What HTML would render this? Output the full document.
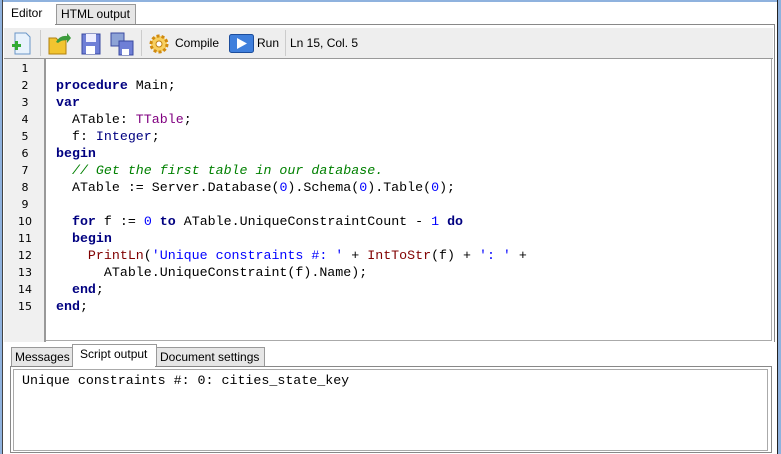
<!DOCTYPE html>
<html><head><style>
body{margin:0;width:781px;height:454px;background:#fff;position:relative;overflow:hidden;font-family:"Liberation Sans",sans-serif;font-size:12px}
.a{position:absolute}
.code{font-family:"Liberation Mono",monospace;font-size:13.3px;line-height:17px;white-space:pre;color:#000}
.k{color:#000080;font-weight:bold}.n{color:#0000ff}.s{color:#0000ff}.f{color:#800000}.t{color:#800080}.c{color:#008000;font-style:italic}.i{color:#000080}
.ln{font-family:"DejaVu Sans",sans-serif;font-size:11px;line-height:17px;text-align:center;color:#000}
</style></head><body>
<div class="a" style="left:0;top:0;width:781px;height:2px;background:#8fb2de"></div>
<div class="a" style="left:0;top:0;width:3px;height:454px;background:#8fb2de"></div>
<div class="a" style="left:2px;top:0;width:1px;height:454px;background:#444"></div>
<div class="a" style="left:777px;top:0;width:1px;height:454px;background:#222"></div>
<div class="a" style="left:778px;top:0;width:3px;height:454px;background:#8fb2de"></div>
<!-- tabs -->
<div class="a" style="left:56px;top:4px;width:78px;height:20px;background:#e6e6e6;border:1px solid #999;border-bottom:none"></div>
<div class="a" style="left:61px;top:7px">HTML output</div>
<div class="a" style="left:11px;top:6px">Editor</div>
<div class="a" style="left:55px;top:24px;width:720px;height:1px;background:#888"></div>
<div class="a" style="left:774px;top:24px;width:1px;height:318px;background:#888"></div>
<!-- toolbar -->
<div class="a" style="left:4px;top:28px;width:769px;height:30px;background:#eee"></div>
<div class="a" style="left:40px;top:30px;width:1px;height:26px;background:#ccc"></div>
<div class="a" style="left:141px;top:30px;width:1px;height:26px;background:#ccc"></div>
<div class="a" style="left:285px;top:30px;width:1px;height:26px;background:#ccc"></div>
<svg class="a" style="left:10px;top:32px" width="24" height="24"><path d="M5 1h11l4 4v17H5z" fill="#e8f2fc" stroke="#6a96c8"/><rect x="2" y="12" width="9" height="3" fill="#3a3"/><rect x="5" y="9" width="3" height="9" fill="#3a3"/></svg>
<svg class="a" style="left:48px;top:32px" width="24" height="24"><path d="M1 6h7l2 2h8v14H1z" fill="#f2c430" stroke="#b08010"/><path d="M8 10q4-7 11-6l0-3 4 5-4 5 0-3q-6 0-9 3z" fill="#3c9b3c"/></svg>
<svg class="a" style="left:80px;top:32px" width="22" height="24"><rect x="2" y="2" width="18" height="20" fill="#6f7fd6" stroke="#3a4aa0"/><rect x="6" y="2" width="10" height="8" fill="#eef"/><rect x="6" y="14" width="9" height="8" fill="#fff"/></svg>
<svg class="a" style="left:110px;top:32px" width="24" height="24"><rect x="1" y="1" width="13" height="13" fill="#8da3d6" stroke="#3a4aa0"/><rect x="9" y="9" width="14" height="14" fill="#6f7fd6" stroke="#3a4aa0"/><rect x="12" y="17" width="7" height="6" fill="#fff"/></svg>
<svg class="a" style="left:148px;top:33px" width="22" height="22"><circle cx="11" cy="11" r="8" fill="#f8d060" stroke="#d08a10" stroke-width="3" stroke-dasharray="3 2"/><circle cx="11" cy="11" r="3" fill="#fff" stroke="#c08010"/></svg>
<div class="a" style="left:175px;top:36px">Compile</div>
<svg class="a" style="left:229px;top:34px" width="25" height="19"><rect x="0.5" y="0.5" width="24" height="18" rx="2" fill="#3f7fdc" stroke="#1c4d9c"/><path d="M8 4l10 5.5L8 15z" fill="#fff"/></svg>
<div class="a" style="left:257px;top:36px">Run</div>
<div class="a" style="left:290px;top:36px">Ln 15, Col. 5</div>
<!-- editor -->
<div class="a" style="left:4px;top:58px;width:769px;height:1px;background:#999"></div>
<div class="a" style="left:4px;top:59px;width:41px;height:283px;background:#f0f0f0"></div>
<div class="a" style="left:44px;top:59px;width:2px;height:283px;background:#999"></div>
<div class="a" style="left:771px;top:59px;width:1px;height:282px;background:#aaa"></div>
<div class="a" style="left:46px;top:340px;width:726px;height:1px;background:#aaa"></div>
<div class="a ln" style="left:4px;top:60px;width:42px">1<br>2<br>3<br>4<br>5<br>6<br>7<br>8<br>9<br>10<br>11<br>12<br>13<br>14<br>15</div>
<div class="a code" style="left:56px;top:60px">
<span class="k">procedure</span> Main;
<span class="k">var</span>
  ATable: <span class="t">TTable</span>;
  f: <span class="i">Integer</span>;
<span class="k">begin</span>
  <span class="c">// Get the first table in our database.</span>
  ATable := Server.Database(<span class="n">0</span>).Schema(<span class="n">0</span>).Table(<span class="n">0</span>);

  <span class="k">for</span> f := <span class="n">0</span> <span class="k">to</span> ATable.UniqueConstraintCount - <span class="n">1</span> <span class="k">do</span>
  <span class="k">begin</span>
    <span class="f">PrintLn</span>(<span class="s">'Unique constraints #: '</span> + <span class="f">IntToStr</span>(f) + <span class="s">': '</span> +
      ATable.UniqueConstraint(f).Name);
  <span class="k">end</span>;
<span class="k">end</span>;</div>
<!-- bottom tabs -->
<div class="a" style="left:11px;top:347px;width:60px;height:19px;background:#e6e6e6;border:1px solid #999;border-bottom:none"></div>
<div class="a" style="left:15px;top:350px">Messages</div>
<div class="a" style="left:72px;top:344px;width:83px;height:22px;background:#fff;border:1px solid #999;border-bottom:none"></div>
<div class="a" style="left:80px;top:347px">Script output</div>
<div class="a" style="left:156px;top:347px;width:107px;height:19px;background:#e6e6e6;border:1px solid #999;border-bottom:none"></div>
<div class="a" style="left:160px;top:350px">Document settings</div>
<div class="a" style="left:10px;top:366px;width:760px;height:86px;border:1px solid #888;border-top:none"></div>
<div class="a" style="left:10px;top:366px;width:63px;height:1px;background:#888"></div>
<div class="a" style="left:155px;top:366px;width:616px;height:1px;background:#888"></div>
<div class="a" style="left:13px;top:369px;width:753px;height:80px;border:1px solid #aaa"></div>
<div class="a code" style="left:22px;top:372px">Unique constraints #: 0: cities_state_key</div>
</body></html>
